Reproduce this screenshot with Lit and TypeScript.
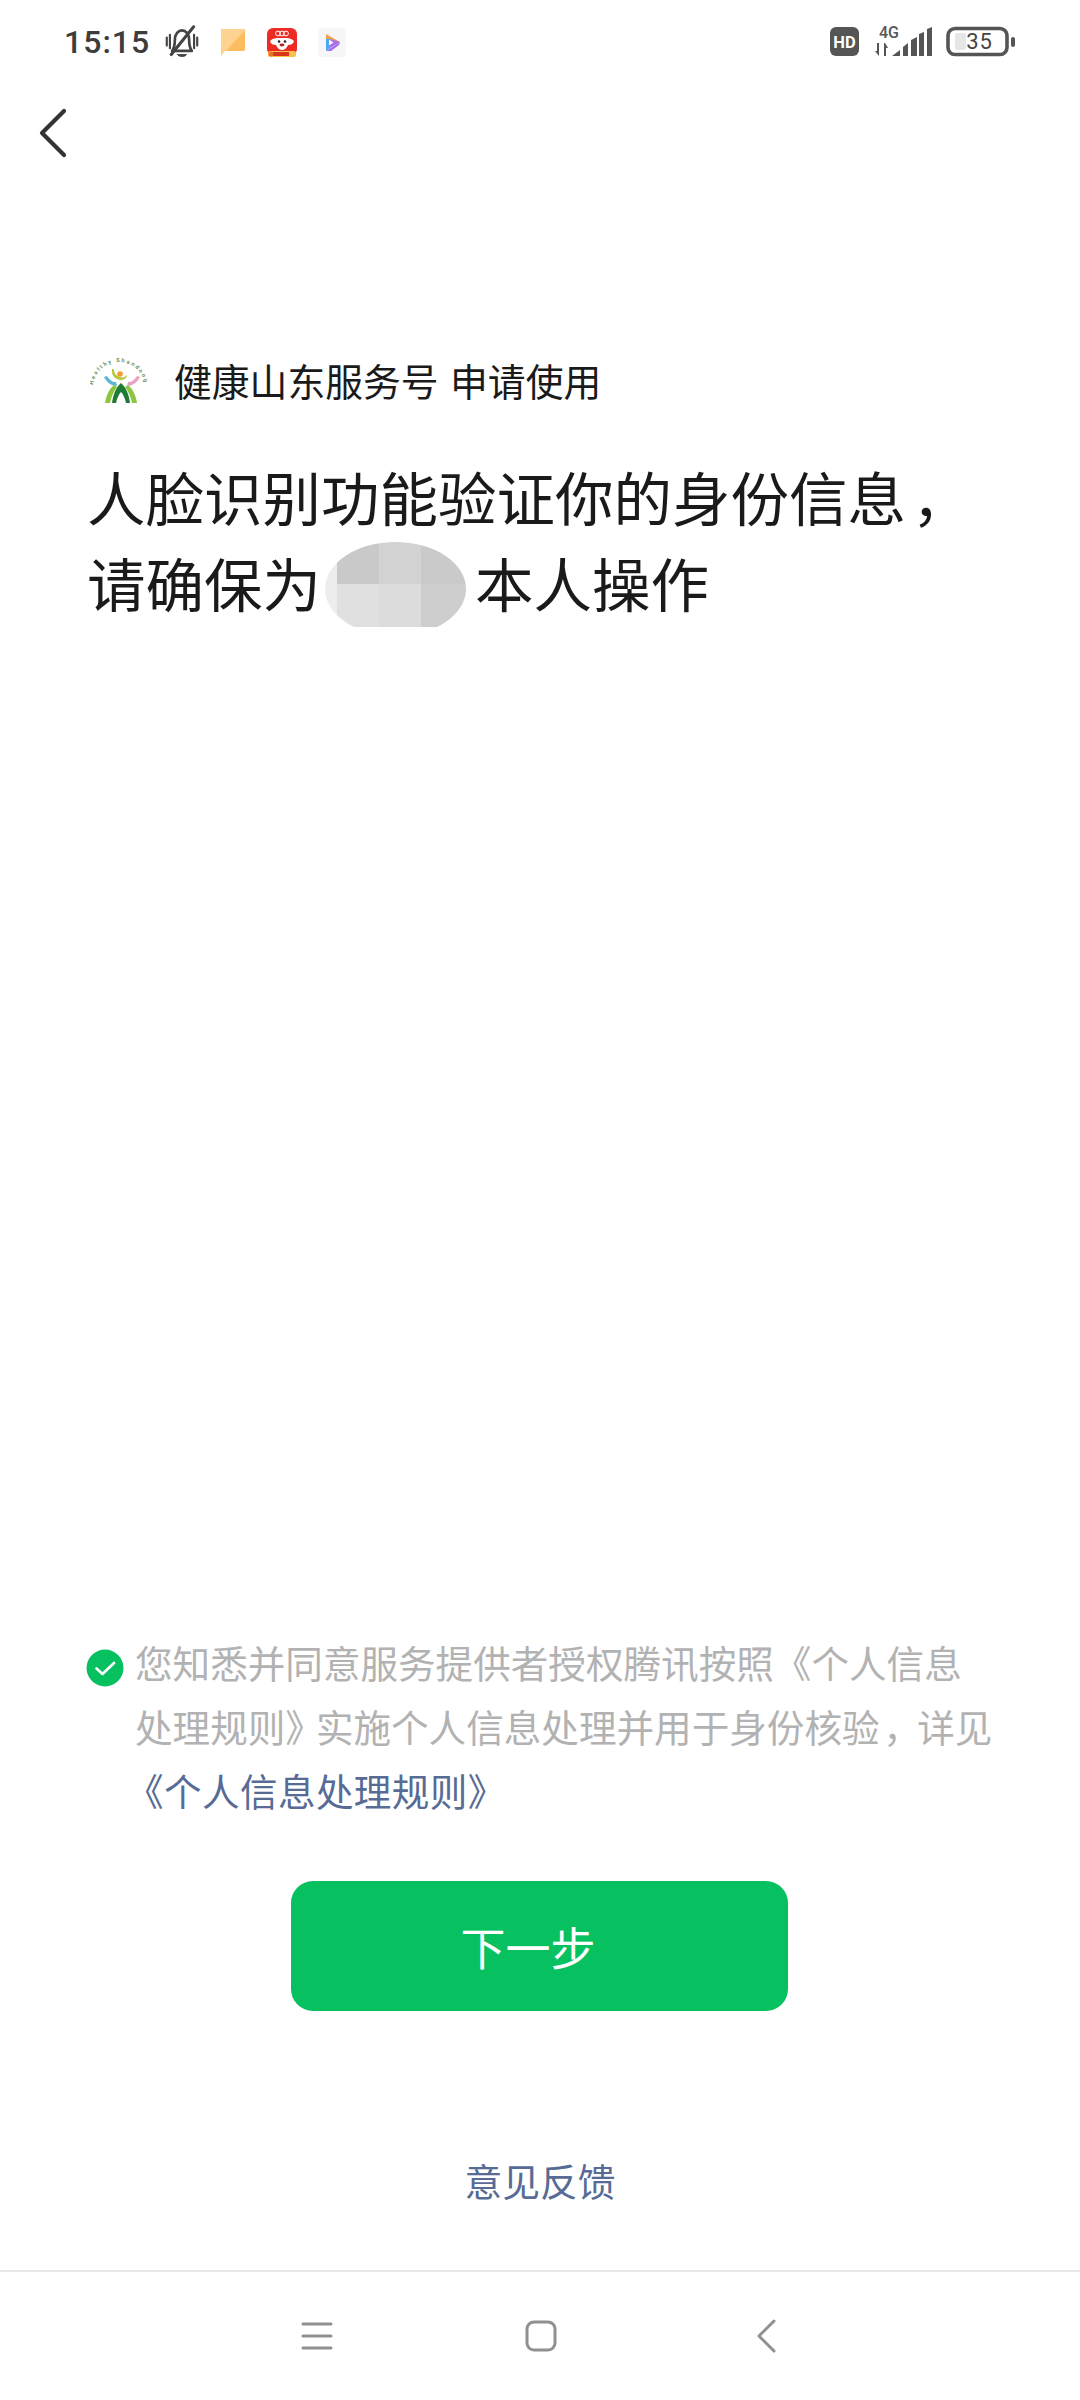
import { LitElement, html, css, svg } from "lit";
import { customElement } from "lit/decorators.js";

@customElement("app-root")
export class AppRoot extends LitElement {
  static styles = css`
    :host { display: block; width: 1080px; height: 2400px; background: #fff; font-family: "Noto Sans CJK SC", "Noto Sans", sans-serif; overflow: hidden; }
    .page { display: flex; flex-direction: column; width: 1080px; height: 2400px; }
    .status { height: 84px; flex: none; display: flex; align-items: center; padding: 0 64px 0 64px; box-sizing: border-box; }
    .time { font: 500 32px/1 Roboto, sans-serif; color: #3c3c3c; letter-spacing: 1px; width: 82px; flex: none; white-space: nowrap; margin-right: -2px; }
    .status svg { display: block; flex: none; }
    .s-left { display: flex; align-items: center; gap: 21px; flex: 1; }
    .s-right { display: flex; align-items: center; gap: 13px; }
    .top { height: 90px; flex: none; display: flex; align-items: center; padding: 8px 0 0 38px; box-sizing: border-box; }
    .body { flex: 1; padding: 176px 0 0 87px; display: flex; flex-direction: column; }
    .brand { display: flex; align-items: center; height: 60px; }
    .brand svg { margin: 1px 0 0 3px; flex: none; }
    .brand span { font-size: 37.8px; word-spacing: 3px; color: #1a1a1a; margin-left: 24px; white-space: pre; line-height: 60px; }
    .title { margin-top: 42px; font-size: 58.5px; color: #1a1a1a; white-space: nowrap; }
    .tline { display: flex; align-items: center; height: 86px; }
    .comma { display: inline-block; box-sizing: border-box; width: 1em; padding-left: .1em; font-feature-settings: "halt"; }
    .mosaic { width: 141px; height: 87px; margin: 5px 9px 0 4px; overflow: hidden; flex: none; }
    .agree { margin-top: auto; display: flex; align-items: flex-start; }
    .agree svg { flex: none; margin: 19px 11px 0 -1px; }
    .agree p { margin: 0; font-size: 37.6px; line-height: 64px; color: #b2b2b2; width: 880px; }
    .ln { display: block; white-space: nowrap; }
    .close { letter-spacing: -7px; }
    .link { color: #576b95; letter-spacing: .4px; margin-left: -9px; }
    .btn-row { display: flex; justify-content: center; padding-right: 89px; margin-top: 59px; }
    .btn { width: 497px; height: 130px; border-radius: 22px; background: #07c160; color: #fff; font-size: 45px; display: flex; align-items: center; padding-right: 22px; box-sizing: border-box; justify-content: center; }
    .fb { text-align: center; padding-right: 87px; font-size: 37.8px; line-height: 60px; color: #576b95; margin-top: 139px; margin-bottom: 60px; }
    .nav { height: 130px; flex: none; border-top: 2px solid #e9e9e9; box-sizing: border-box; display: flex; align-items: center; justify-content: space-between; padding: 0 303px 0 301px; }
    .nav svg { display: block; }
    .home { margin-right: 8px; }
  `;

  private bell() {
    return html`<svg width="34" height="34" viewBox="0 0 38 38" fill="none" stroke="#444" stroke-width="3" stroke-linecap="round">
      <path d="M8 29c2-3 3-6 3-12 0-7 4-11 8-11s8 4 8 11c0 6 1 9 3 12z" stroke-linejoin="round" />
      <path d="M14 33h10c-1 3-9 3-10 0z" fill="#444" stroke-width="1" />
      <path d="M2 14v9M5.500 11v15M32.500 11v15M36 14v9" stroke-width="2.400" />
      <path d="M32 2 7 33" stroke-width="3.400" />
    </svg>`;
  }

  private note() {
    return html`<svg width="26" height="28" viewBox="0 0 26 28">
      <path d="M1 1h24v20c0 1-1 2-2 2H5l-4 5z" fill="#fed38f" />
      <path d="M25 2v19c0 1-1 2-2 2H6z" fill="#fbbd5f" />
    </svg>`;
  }

  private redApp() {
    return html`<svg width="30" height="29" viewBox="0 0 30 29">
      <rect width="30" height="27" rx="6" fill="#ee2a24" />
      <path d="M3 13c3-3 6-3 9-3h6c3 0 6 0 9 3-1 3-3 4-6 4-1 3-4 5-6 5s-5-2-6-5c-3 0-5-1-6-4z" fill="#fff" />
      <circle cx="12" cy="13.500" r="1.300" fill="#222" /><circle cx="18" cy="13.500" r="1.300" fill="#222" />
      <ellipse cx="15" cy="17" rx="2.500" ry="1.400" fill="#b3261e" />
      <circle cx="11" cy="5.500" r="2.400" fill="none" stroke="#fff" stroke-width="1" />
      <circle cx="15" cy="5.500" r="2.400" fill="none" stroke="#fff" stroke-width="1" />
      <circle cx="19" cy="5.500" r="2.400" fill="none" stroke="#fff" stroke-width="1" />
      <rect x="1" y="23" width="28" height="6" rx="2" fill="#f8c04a" />
      <rect x="6" y="24" width="16" height="4" fill="#d8351f" />
      <circle cx="4" cy="26" r="2.500" fill="#e8702a" />
    </svg>`;
  }

  private play() {
    return html`<svg width="28" height="29" viewBox="0 0 28 29">
      <rect width="28" height="29" rx="4" fill="#f6f6f8" />
      <path d="M8 6l14 8-5 1-5-4H8z" fill="#f0a04b" />
      <path d="M8 11h4v9l-4 3z" fill="#4aa9f0" />
      <path d="M8 23l14-9-1 3-8 6z" fill="#a56cf0" />
      <path d="M12 11l10 3-10 6z" fill="#a56cf0" />
      <path d="M11 11.500v6l4.500-3z" fill="#fff" />
    </svg>`;
  }

  private right() {
    return html`
      <svg width="30" height="30" viewBox="0 0 30 30">
        <rect width="29" height="29" rx="6" fill="#555" />
        <text x="14.500" y="20.500" font-family="Roboto, sans-serif" font-size="16.500" font-weight="700" fill="#fff" text-anchor="middle">HD</text>
      </svg>
      <svg width="60" height="38" viewBox="0 -2 60 38">
        <text x="16" y="13" font-family="Roboto, sans-serif" font-size="16" font-weight="500" fill="#555" text-anchor="middle">4G</text>
        <path d="M6 18v13L2 26h2v-8zM11 31V18h1l3 5h-2v8z" fill="#555" />
        <path d="M19 31l8-6v6z" fill="#555" />
        <path d="M30 22l5-4v13h-5zM38 15l6-3v19h-6zM46 9l5-2v24h-5zM54 4l5-2v29h-5z" fill="#555" />
      </svg>
      <svg width="70" height="32" viewBox="0 0 70 32">
        <rect x="2" y="2.500" width="59" height="26" rx="7" fill="#fff" stroke="#555" stroke-width="3.600" />
        <rect x="9" y="7" width="11" height="17" rx="2" fill="#e6e6e6" />
        <text x="33.500" y="23" font-family="Roboto, sans-serif" font-size="22" fill="#444" text-anchor="middle" letter-spacing="1">35</text>
        <rect x="65" y="11" width="4" height="10" rx="2" fill="#555" />
      </svg>`;
  }

  private logo() {
    return html`<svg width="60" height="54" viewBox="-2 -6 60 54">
      <defs><path id="arc" d="M1 28A26 26 0 0 1 53 28" /></defs>
      <text font-size="5.500" font-family="Roboto, sans-serif" font-weight="700" fill="#6f8f58" letter-spacing="1.800"><textPath href="#arc" startOffset="3">Healthy Shandong</textPath></text>
      <circle cx="28" cy="14" r="2.800" fill="#f39a30" />
      <path d="M20 9C19 16 24 20 29 20 33 20 35 17 35 15 33 17 31 18 28 17 24 16 22 13 22 9z" fill="#b8c83a" />
      <path d="M12 17c3 6 8 9 13 9l-1-4c-4 0-6-2-9-6z" fill="#58b7d6" />
      <path d="M48 17c-3 6-8 9-13 9l1-4c4 0 6-2 9-6z" fill="#e8a3c0" />
      <path d="M13 43c1-7 4-14 9-18l3 2c-3 4-6 10-7 16z" fill="#8cc63f" />
      <path d="M45 43c-1-7-4-14-9-18l-3 2c3 4 6 10 7 16z" fill="#8cc63f" />
      <path d="M20 43c1-8 4-16 9-20 5 4 8 12 9 20h-4c-1-5-3-9-5-11-2 2-4 6-5 11z" fill="#1f7a34" />
    </svg>`;
  }

  private mosaic() {
    const cells = svg`
      <rect x="0" y="0" width="12" height="87" fill="#ededed" />
      <rect x="12" y="0" width="42" height="44" fill="#c9c9c9" />
      <rect x="54" y="0" width="42" height="44" fill="#d2d2d2" />
      <rect x="96" y="0" width="45" height="44" fill="#cacaca" />
      <rect x="12" y="44" width="42" height="43" fill="#e0e0e0" />
      <rect x="54" y="44" width="42" height="43" fill="#dcdcdc" />
      <rect x="96" y="44" width="45" height="43" fill="#cecece" />`;
    return html`<svg class="mosaic" viewBox="0 0 141 87">
      <defs><clipPath id="mc"><ellipse cx="70.500" cy="49" rx="70.500" ry="47" /></clipPath></defs>
      <g clip-path="url(#mc)">${cells}</g>
    </svg>`;
  }

  render() {
    return html`<div class="page">
      <div class="status">
        <div class="s-left">
          <span class="time">15:15</span>
          ${this.bell()} ${this.note()} ${this.redApp()} ${this.play()}
        </div>
        <div class="s-right">${this.right()}</div>
      </div>
      <div class="top">
        <svg width="30" height="50" viewBox="0 0 30 50" fill="none" stroke="#333" stroke-width="4.200" stroke-linecap="round" stroke-linejoin="round"><path d="M26 3 4 25l22 22" /></svg>
      </div>
      <div class="body">
        <div class="brand">${this.logo()}<span>健康山东服务号 申请使用</span></div>
        <div class="title">
          <div class="tline">人脸识别功能验证你的身份信息<span class="comma">，</span></div>
          <div class="tline">请确保为${this.mosaic()}本人操作</div>
        </div>
        <div class="agree">
          <svg width="38" height="38" viewBox="0 0 38 38"><circle cx="19" cy="19" r="18.500" fill="#07c160" /><path d="M10.500 19.500 16.500 25 28 14" fill="none" stroke="#fff" stroke-width="2.600" stroke-linecap="round" stroke-linejoin="round" /></svg>
          <p>
            <span class="ln">您知悉并同意服务提供者授权腾讯按照《个人信息</span>
            <span class="ln">处理规则<span class="close">》</span>实施个人信息处理并用于身份核验<span class="comma">，</span>详见</span>
            <span class="ln link">《个人信息处理规则》</span>
          </p>
        </div>
        <div class="btn-row"><div class="btn">下一步</div></div>
        <div class="fb">意见反馈</div>
      </div>
      <div class="nav">
        <svg width="32" height="28" viewBox="0 0 32 28" fill="none" stroke="#909090" stroke-width="3" stroke-linecap="round"><path d="M2 2h28M2 14h28M2 26h28" /></svg>
        <svg class="home" width="32" height="32" viewBox="0 0 32 32" fill="none" stroke="#909090" stroke-width="3"><rect x="2" y="2" width="28" height="28" rx="7" /></svg>
        <svg width="20" height="34" viewBox="0 0 20 34" fill="none" stroke="#909090" stroke-width="3" stroke-linecap="round" stroke-linejoin="round"><path d="M17 2 2 17l15 15" /></svg>
      </div>
    </div>`;
  }
}
